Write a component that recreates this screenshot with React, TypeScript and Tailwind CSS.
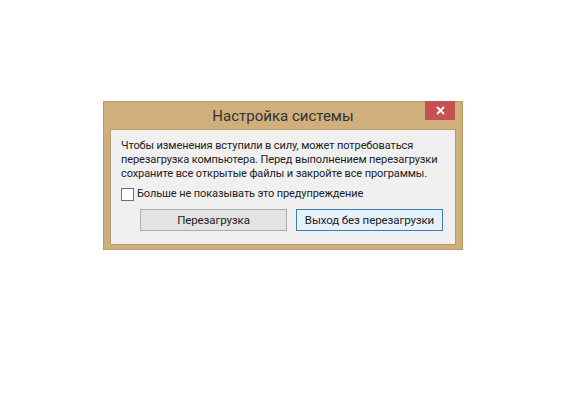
import React from "react";

const font = { fontFamily: 'Roboto, "Noto Sans", sans-serif' };

const Button = ({ label, primary }: { label: string; primary?: boolean }) => (
  <button
    className={
      primary
        ? "w-[147px] h-[22px] border border-[#3c7fb1] bg-[#e5f1fb] text-[11.5px] text-[#222]"
        : "w-[147px] h-[22px] border border-[#acacac] bg-[#e3e3e3] text-[11.5px] text-[#222]"
    }
  >
    {label}
  </button>
);

export default function App() {
  return (
    <div className="w-[583px] h-[400px] bg-white" style={font}>
      <div className="pt-[101px] pl-[103px]">
        <div className="w-[360px] h-[149px] bg-[#cfaf7b] border border-[#b89a66] flex flex-col">
          <div className="h-[27px] shrink-0 flex relative">
            <div className="flex-1 text-center text-[15px] text-[#333] pt-[3px]">
              Настройка системы
            </div>
            <div className="absolute right-[7px] top-[-1px] w-[30px] h-[19px] bg-[#c75050] flex items-center justify-center">
              <svg width="9" height="9" viewBox="0 0 9 9">
                <path d="M1 1L8 8M8 1L1 8" stroke="white" strokeWidth="1.8" />
              </svg>
            </div>
          </div>
          <div className="mx-[6px] mb-[4px] flex-1 bg-[#f0f0f0] border border-[#b69b6c] px-[10px] pt-[9px] text-[11px] tracking-[-0.1px] text-[#222] leading-[14px] whitespace-nowrap">
            <p>
              Чтобы изменения вступили в силу, может потребоваться
              <br />
              перезагрузка компьютера. Перед выполнением перезагрузки
              <br />
              сохраните все открытые файлы и закройте все программы.
            </p>
            <label className="flex items-center gap-[3px] mt-[6px]">
              <span className="w-[13px] h-[13px] border border-[#707070] bg-white" />
              Больше не показывать это предупреждение
            </label>
            <div className="flex gap-[9px] mt-[8px] pl-[19px]">
              <Button label="Перезагрузка" />
              <Button label="Выход без перезагрузки" primary />
            </div>
          </div>
        </div>
      </div>
    </div>
  );
}
